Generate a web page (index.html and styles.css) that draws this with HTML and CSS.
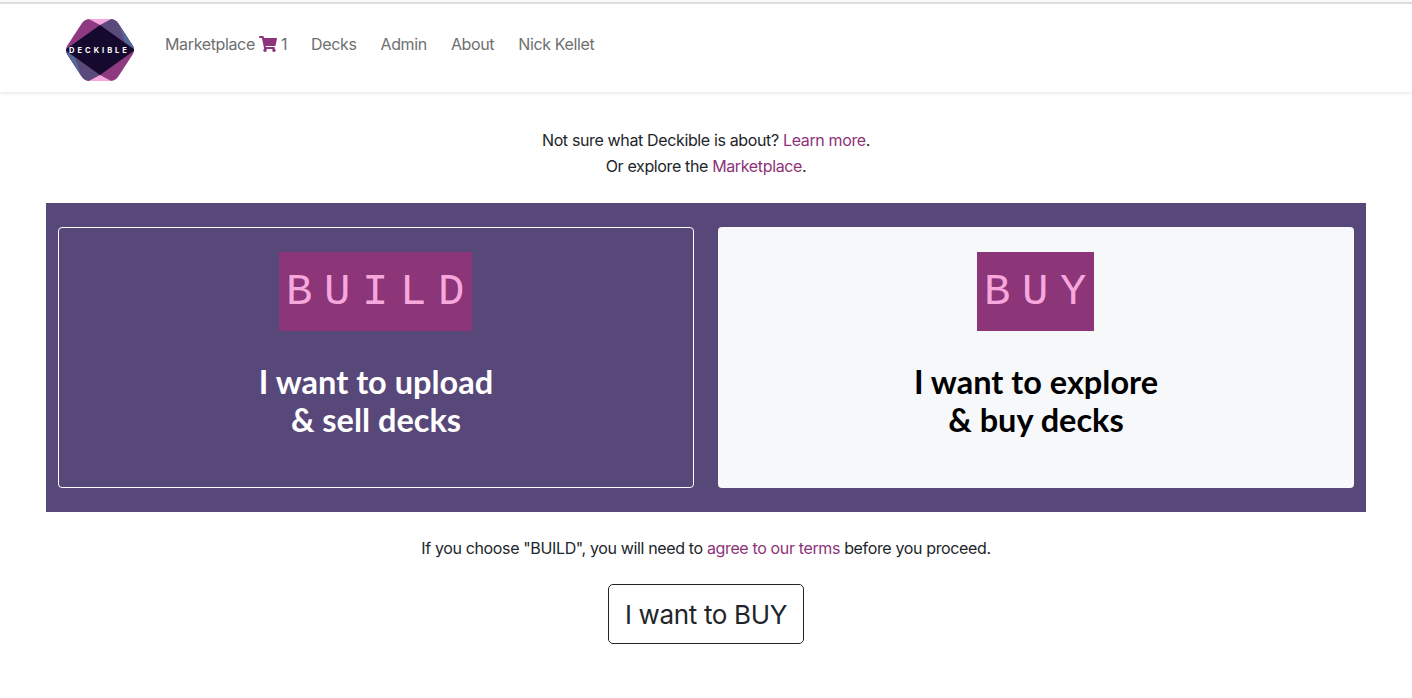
FILE: index.html
```html
<!DOCTYPE html>
<html lang="en">
<head>
    <meta charset="UTF-8">
    <title>Deckible</title>
    <link rel="stylesheet" href="styles.css">
</head>
<body>

<nav class="navbar">
    <a class="logo" href="#">
        <svg width="70" height="64" viewBox="0 0 70 64">
            <defs>
                <clipPath id="hex">
                    <path d="M17 5 Q20 1 25 1 L45 1 Q50 1 53 5 L68 28 Q70 32 68 36 L53 59 Q50 63 45 63 L25 63 Q20 63 17 59 L2 36 Q0 32 2 28 Z"/>
                </clipPath>
            </defs>
            <g clip-path="url(#hex)">
                <rect width="70" height="64" fill="#8e3a80"/>
                <path d="M35 7 L48 0 L70 0 L70 32 Z" fill="#5a4a7c"/>
                <path d="M35 57 L22 64 L0 64 L0 32 Z" fill="#5a4a7c"/>
                <path d="M52 0 L70 32 L60 25 Z" fill="#4f6a9a"/>
                <path d="M18 64 L0 32 L10 39 Z" fill="#4f6a9a"/>
                <path d="M22 0 L35 7 L48 0 Z" fill="#f6a8dc"/>
                <path d="M22 64 L35 57 L48 64 Z" fill="#f6a8dc"/>
                <path d="M35 7 L70 32 L35 57 L0 32 Z" fill="#150a2e"/>
            </g>
            <text class="logo-text" x="34.5" y="35" text-anchor="middle">DECKIBLE</text>
        </svg>
    </a>
    <ul class="nav-links">
        <li>
            <a href="#">Marketplace</a>
            <svg class="cart" width="18" height="16" viewBox="0 0 576 512"><path d="M528 301l47-208c3-15-8-29-23-29H159l-9-45C148 8 138 0 127 0H24C11 0 0 11 0 24v16c0 13 11 24 24 24h70l70 343c-17 10-28 28-28 49 0 31 25 56 56 56s56-25 56-56c0-16-6-30-17-40h209c-11 10-17 24-17 40 0 31 25 56 56 56s56-25 56-56c0-22-13-41-32-50l5-24c3-15-8-29-23-29H217l-7-32h295c11 0 21-8 23-19z"/></svg>
            <a href="#">1</a>
        </li>
        <li><a href="#">Decks</a></li>
        <li><a href="#">Admin</a></li>
        <li><a href="#">About</a></li>
        <li><a href="#">Nick Kellet</a></li>
    </ul>
</nav>

<p class="intro">
    Not sure what Deckible is about? <a href="#">Learn more</a>.<br>
    Or explore the <a href="#">Marketplace</a>.
</p>

<section class="choices">
    <div class="choice choice-build">
        <div class="stamp stamp-build">BUILD</div>
        <h2>I want to upload<br>&amp; sell decks</h2>
    </div>
    <div class="choice choice-buy">
        <div class="stamp stamp-buy">BUY</div>
        <h2>I want to explore<br>&amp; buy decks</h2>
    </div>
</section>

<p class="terms">If you choose "BUILD", you will need to <a href="#">agree to our terms</a> before you proceed.</p>

<div class="btn-wrap">
    <a class="btn" href="#">I want to BUY</a>
</div>

</body>
</html>
```
FILE: styles.css
```css
* {
    box-sizing: border-box;
}

body {
    margin: 0;
    padding-top: 2px;
    background-color: #fff;
    color: #212529;
    font-family: "Inter", "Liberation Sans", sans-serif;
    font-size: 16px;
    line-height: 26px;
    letter-spacing: -0.36px;
}

a {
    color: #8c3379;
    text-decoration: none;
}

.navbar {
    height: 90px;
    padding: 0 65px;
    display: flex;
    align-items: center;
    gap: 30px;
    background-color: #fff;
    border-top: 2px solid #dedede;
    box-shadow: 0 1px 4px rgba(0, 0, 0, 0.12);
}

.logo {
    display: flex;
    margin-top: 4px;
}

.logo-text {
    fill: #fff;
    font-family: "Inter", sans-serif;
    font-size: 7.5px;
    font-weight: 700;
    letter-spacing: 3px;
}

.nav-links {
    display: flex;
    gap: 24px;
    list-style: none;
    margin: 0 0 8px;
    padding: 0;
}

.nav-links li {
    display: flex;
    align-items: center;
    gap: 4px;
}

.nav-links a {
    color: #6f6f6f;
}

.cart {
    fill: #8c3379;
}

.intro {
    margin: 35px 0 0;
    text-align: center;
}

.choices {
    margin: 24px 46px 0;
    padding: 24px 12px;
    display: grid;
    grid-template-columns: 1fr 1fr;
    gap: 24px;
    background-color: #58487a;
}

.choice {
    height: 261px;
    padding-top: 25px;
    border-radius: 4px;
    text-align: center;
}

.choice-build {
    border: 1px solid #fff;
    padding-top: 24px;
    color: #fff;
}

.choice-buy {
    background-color: #f7f8fa;
    color: #000;
}

.choice h2 {
    margin: 32px 0 0;
    font-family: "Lato", sans-serif;
    font-size: 32.5px;
    font-weight: 700;
    line-height: 38px;
    letter-spacing: 0;
}

.stamp {
    height: 79px;
    margin: 0 auto;
    display: flex;
    align-items: center;
    justify-content: center;
    background-color: #8c3579;
    color: #f6a8dc;
    font-family: "Liberation Mono", monospace;
    font-size: 44px;
    letter-spacing: 11.6px;
    padding-left: 12px;
    transform: translateX(-1px);
}

.stamp-build {
    width: 193px;
}

.stamp-buy {
    width: 117px;
}

.terms {
    margin: 23px 0 0;
    text-align: center;
}

.btn-wrap {
    margin-top: 23px;
    text-align: center;
}

.btn {
    display: inline-block;
    padding: 12px 16px 10px;
    border: 1px solid #212529;
    border-radius: 5px;
    color: #212529;
    font-size: 26px;
    line-height: 36px;
    letter-spacing: -0.33px;
}
```
